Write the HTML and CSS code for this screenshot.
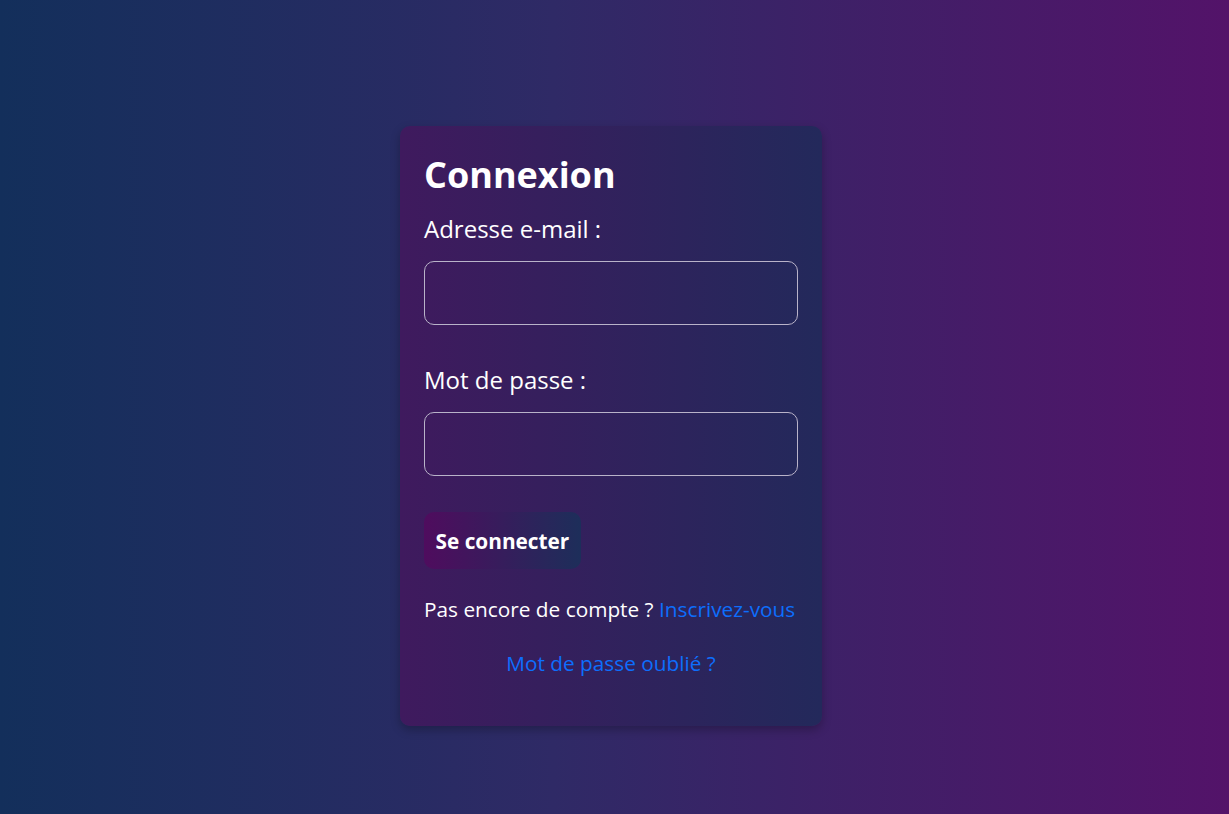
FILE: index.html
```html
<!DOCTYPE html>
<html lang="fr">
<head>
<meta charset="utf-8">
<title>Connexion</title>
<link rel="stylesheet" href="styles.css">
</head>
<body>
<main class="page">
  <form class="card">
    <h2 class="title">Connexion</h2>
    <label class="label" for="email">Adresse e-mail :</label>
    <input class="field" id="email" type="email">
    <label class="label label-second" for="pwd">Mot de passe :</label>
    <input class="field" id="pwd" type="password">
    <div class="actions"><button class="btn" type="button">Se connecter</button></div>
    <p class="signup">Pas encore de compte ? <a class="link" href="#">Inscrivez-vous</a></p>
    <p class="forgot"><a class="link" href="#">Mot de passe oublié ?</a></p>
  </form>
</main>
</body>
</html>
```
FILE: styles.css
```css
* { box-sizing: border-box; }
html, body { margin: 0; height: 100%; }
body {
  font-family: "Open Sans", "Noto Sans", sans-serif;
  background: linear-gradient(to right, #132f5b 0%, #2f2a66 45%, #531369 100%);
  color: #fff;
}
.page {
  display: flex;
  justify-content: center;
  padding: 126px 7px 0 0;
}
.card {
  width: 422px;
  height: 600px;
  padding: 24px 24px 24px;
  border-radius: 10px;
  background: linear-gradient(to right, #3f1a5e 0%, #23295b 100%);
  box-shadow: 0 4px 10px rgba(0, 0, 0, 0.25);
  display: flex;
  flex-direction: column;
}
.card > * { flex-shrink: 0; }
.title {
  margin: 0;
  font-size: 36px;
  font-weight: 700;
  line-height: 49px;
}
.label {
  font-size: 24px;
  line-height: 33px;
  margin: 13px 0 16px;
}
.label-second { margin-top: 38px; }
.field {
  width: 374px;
  height: 64px;
  border: 1px solid #b9b3c9;
  border-radius: 10px;
  background: transparent;
  color: #fff;
  font-size: 18px;
  padding: 0 12px;
}
.actions { margin-top: 36px; display: flex; }
.btn {
  height: 57px;
  padding: 0 11.5px;
  border: none;
  border-radius: 10px;
  background: linear-gradient(to right, #4f0c5e 0%, #1d2e5a 100%);
  color: #fff;
  font-family: inherit;
  font-size: 20.8px;
  font-weight: 700;
}
.signup {
  margin: 26px 0 0;
  font-size: 20.8px;
  line-height: 28px;
  white-space: nowrap;
}
.forgot {
  margin: 26px 0 0;
  font-size: 20.8px;
  line-height: 28px;
  text-align: center;
  white-space: nowrap;
}
.link { color: #0d6efd; text-decoration: none; }
```
